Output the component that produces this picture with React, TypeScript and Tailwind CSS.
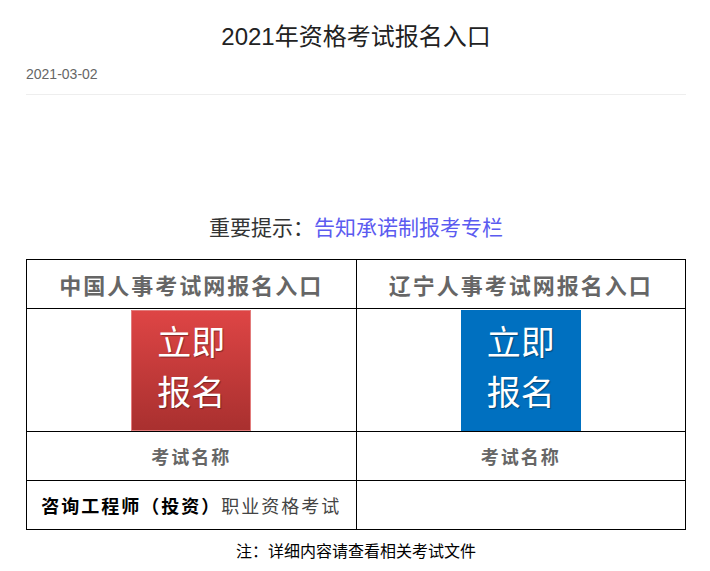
const sans = "font-['Liberation_Sans','Noto_Sans_CJK_SC',sans-serif]";
const cjk = "font-['Noto_Sans_CJK_SC',sans-serif]";

function SignupButton({ tone }: { tone: "red" | "blue" }) {
  const skin =
    tone === "red"
      ? "bg-gradient-to-b from-[#de4545] to-[#a9302f] border border-[#e27b7b]"
      : "bg-[#0070c0]";
  return (
    <a
      href="#"
      className={`mx-auto flex h-[121px] w-[120px] flex-col items-center justify-center pb-[8px] text-[34px] leading-[50px] text-white [text-shadow:1px_1px_1px_rgba(0,0,0,0.35)] ${cjk} ${skin}`}
    >
      <span>立即</span>
      <span>报名</span>
    </a>
  );
}

export default function App() {
  return (
    <div className={`min-h-[571px] bg-white pl-[26px] pr-[24px] ${sans}`}>
      <h1 className="pt-[19px] text-center text-[24px] leading-[36px] text-[#222]">
        2021年资格考试报名入口
      </h1>
      <div className="mt-[9px] border-b border-[#eeeeee] pb-[10px] text-[14px] leading-[20px] text-[#666]">
        2021-03-02
      </div>

      <p className={`mt-[116px] text-center text-[21px] leading-[30px] text-[#333] ${cjk}`}>
        重要提示：
        <a href="#" className="text-[#5b5bf0]">
          告知承诺制报考专栏
        </a>
      </p>

      <table className={`mt-[18px] w-full table-fixed border-collapse border border-black ${cjk}`}>
        <tbody>
          <tr className="h-[49px]">
            <td className="border border-black text-center text-[22px] font-bold tracking-[2px] text-[#666]">
              中国人事考试网报名入口
            </td>
            <td className="border border-black text-center text-[22px] font-bold tracking-[2px] text-[#666]">
              辽宁人事考试网报名入口
            </td>
          </tr>
          <tr className="h-[123px]">
            <td className="border border-black p-0">
              <SignupButton tone="red" />
            </td>
            <td className="border border-black p-0">
              <SignupButton tone="blue" />
            </td>
          </tr>
          <tr className="h-[49px]">
            <td className="border border-black text-center text-[18px] font-bold tracking-[2px] text-[#666]">
              考试名称
            </td>
            <td className="border border-black text-center text-[18px] font-bold tracking-[2px] text-[#666]">
              考试名称
            </td>
          </tr>
          <tr className="h-[49px]">
            <td className="border border-black text-center text-[18px] tracking-[2px]">
              <span className="font-bold text-black">咨询工程师（投资）</span>
              <span className="text-[#444]">职业资格考试</span>
            </td>
            <td className="border border-black" />
          </tr>
        </tbody>
      </table>

      <p className={`mt-[8px] text-center text-[16px] leading-[24px] text-black ${cjk}`}>
        注：详细内容请查看相关考试文件
      </p>
    </div>
  );
}
